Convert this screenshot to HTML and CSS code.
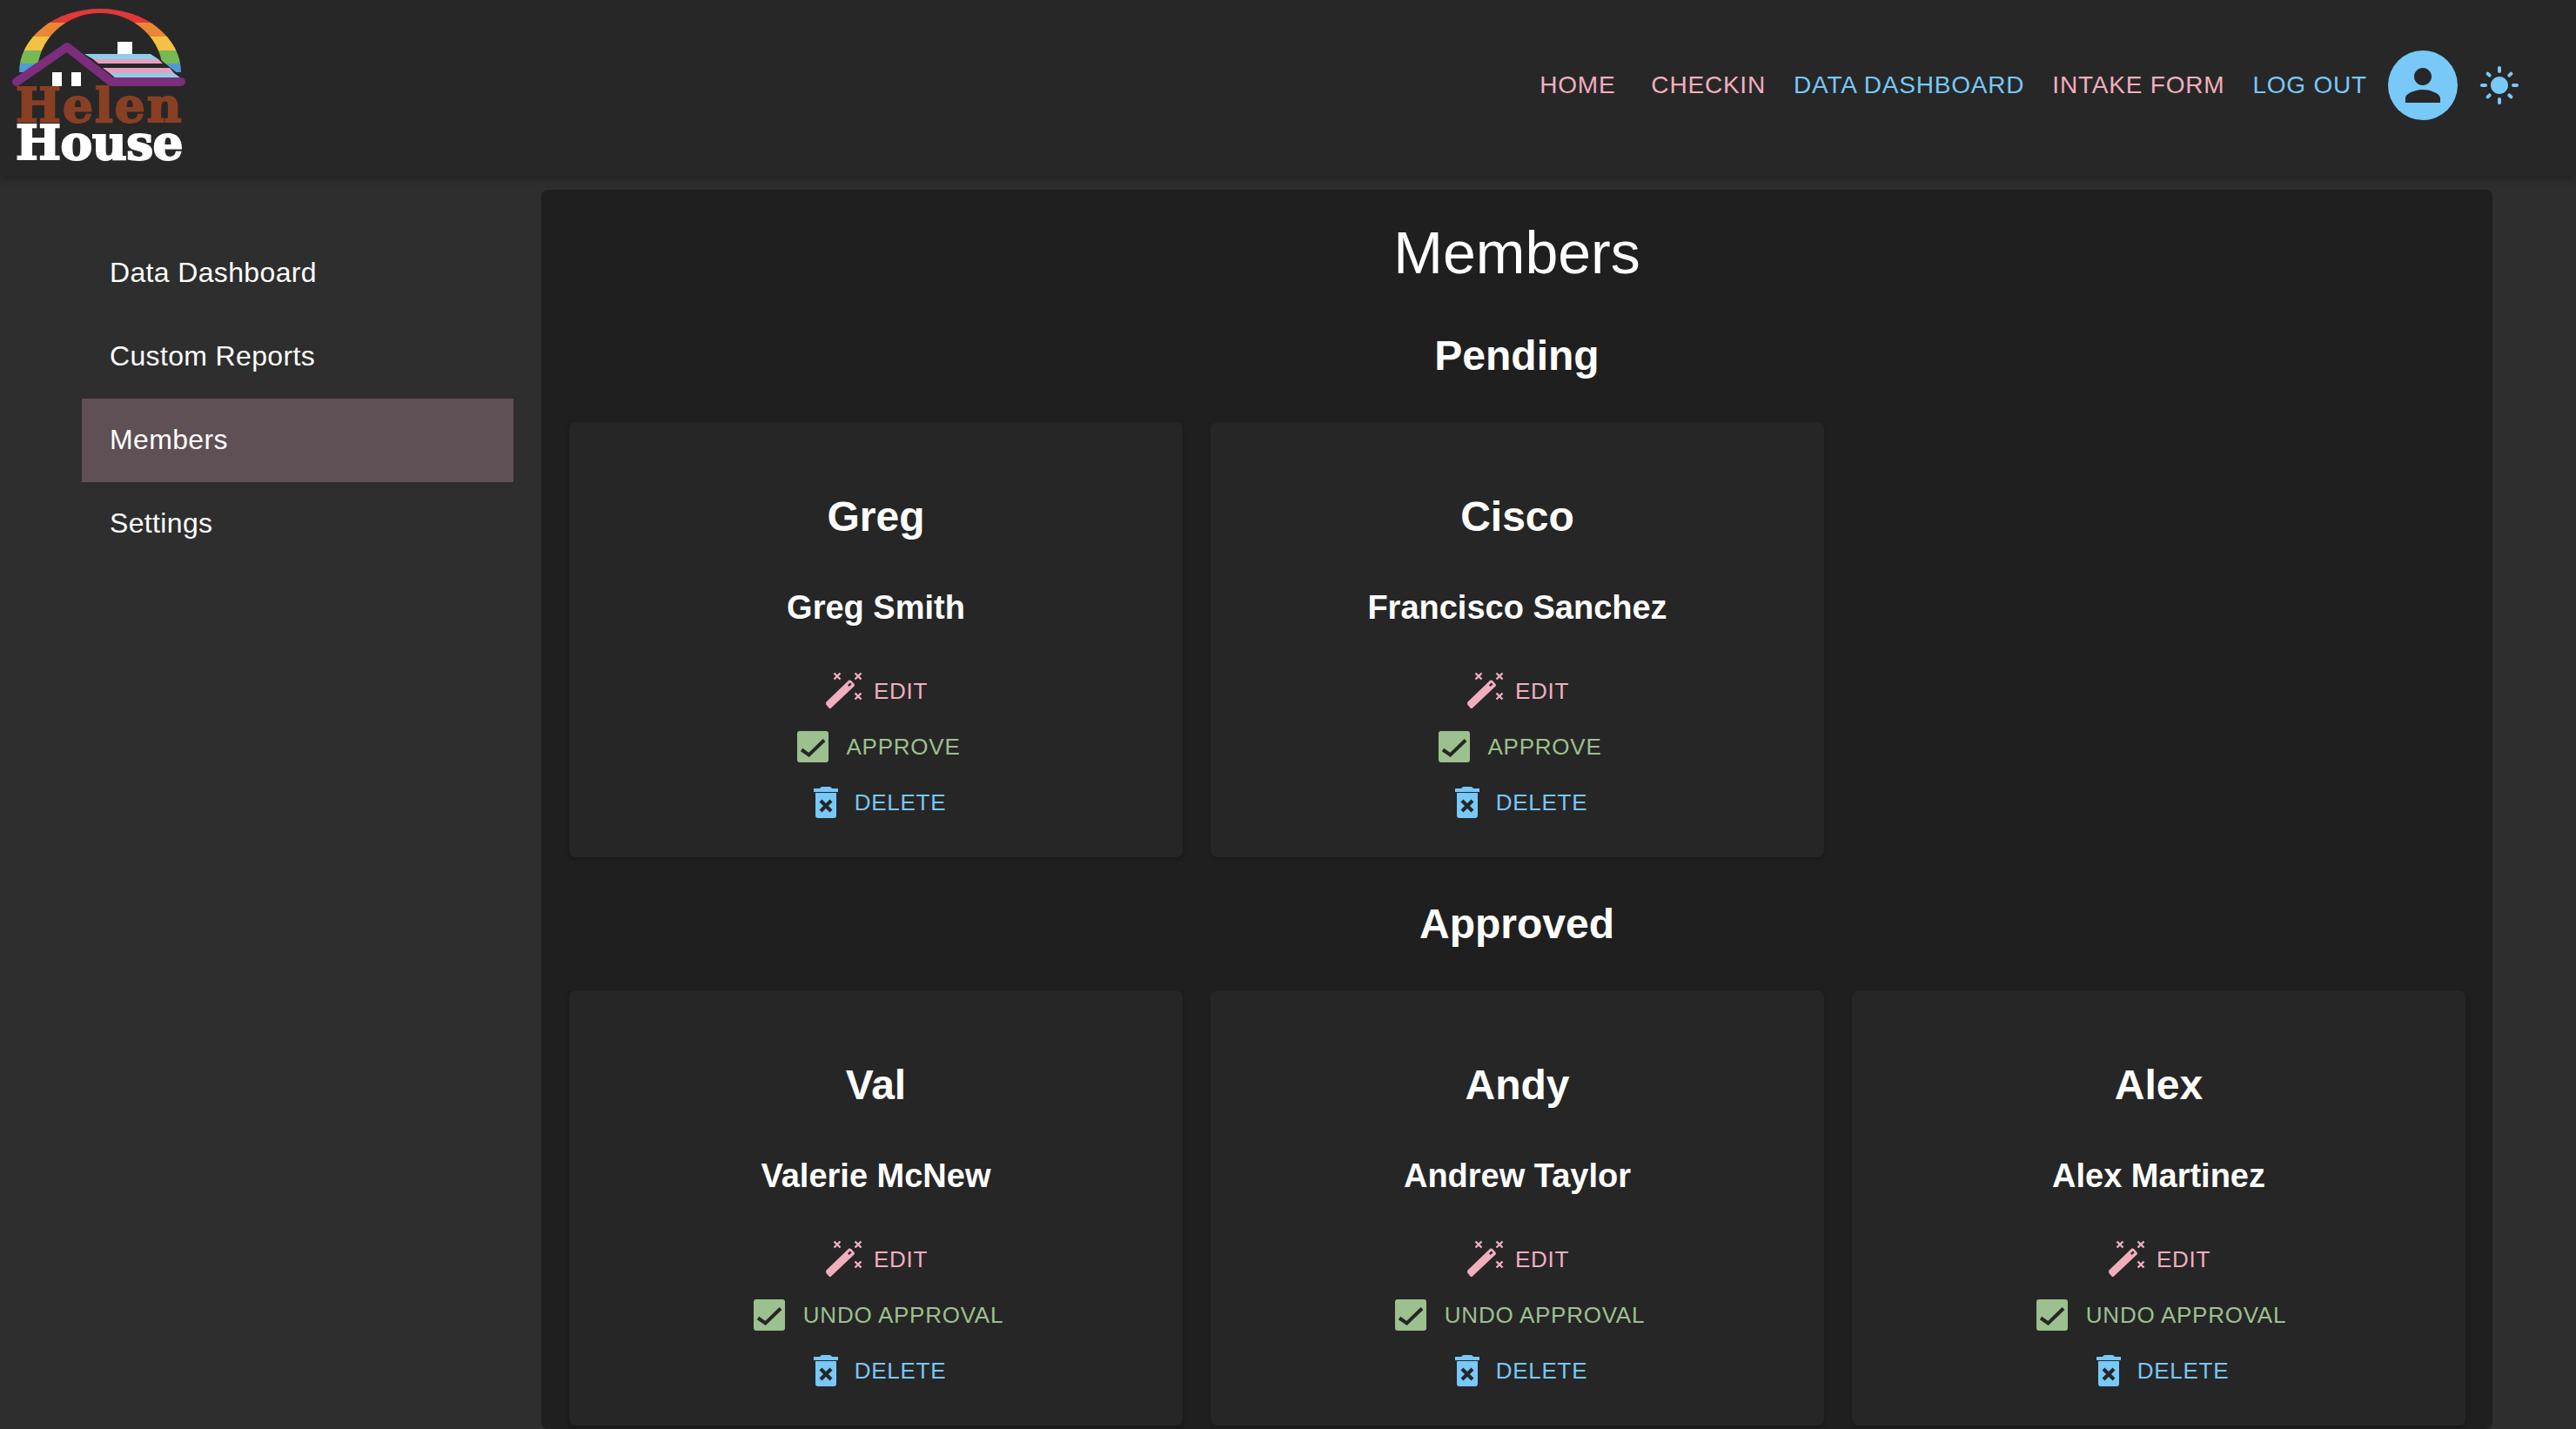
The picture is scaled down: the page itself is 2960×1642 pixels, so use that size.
FILE: index.html
```html
<!DOCTYPE html>
<html lang="en">
  <head>
    <title>Helen House</title>
    <link rel="stylesheet" href="styles.css">
  </head>
  <body>
    <svg class="sprites" width="0" height="0">
      <symbol id="wand" viewBox="0 0 44 44">
        <path fill="currentColor" d="M0.500 34.500 26.500 9.500q1.500-.5 3 1l3 3.500q1 1.500 0 2.500L6 41.500q-1 1-2.500 0L.5 38q-1-1.500 0-3.500Z"/>
        <path fill="#262626" d="M25 15l3-2.500 1.500 2-3 2.500Z"/>
        <path fill="none" stroke="currentColor" stroke-width="2.400" d="M9.500 1.500l7 7M16.500 1.500l-7 7M33.500 1.500l7 7M40.500 1.500l-7 7M33.500 24.500l7 7M40.500 24.500l-7 7"/>
      </symbol>
      <symbol id="check" viewBox="0 0 36 36">
        <rect width="36" height="36" rx="3" fill="currentColor"/>
        <path fill="none" stroke="#262626" stroke-width="4" d="M5 21.500 13.500 27.500 31 10.500"/>
      </symbol>
      <symbol id="trash" viewBox="0 0 28 36">
        <path fill="currentColor" d="M0 2h7q1-2 3-2h8q2 0 3 2h7v4H0ZM2 7h24v26q0 3-3 3H5q-3 0-3-3Z"/>
        <path fill="none" stroke="#262626" stroke-width="4.200" d="M8 16l12 12M20 16 8 28"/>
      </symbol>
      <clipPath id="arc">
        <path fill-rule="evenodd" clip-rule="evenodd" d="M22 83A93 73 0 0 1 208 83H187A72 68 0 0 0 43 83Z"/>
      </clipPath>
    </svg>

    <header class="appbar">
      <div class="brand">
        <svg class="logo" viewBox="0 0 216 100" width="216" height="100">
          <g clip-path="url(#arc)">
            <rect x="20" y="73" width="190" height="10" fill="#4f9bd4"/>
            <rect x="20" y="58" width="190" height="15" fill="#78b956"/>
            <rect x="20" y="42" width="190" height="16" fill="#f3c244"/>
            <rect x="20" y="26" width="190" height="16" fill="#ea8636"/>
            <rect x="20" y="8" width="190" height="18" fill="#e0393a"/>
          </g>
          <path fill="#272727" d="M96 61h79l36 29v8H130L76 58Z"/>
          <path fill="#fff" d="M135 48h17v14h-17Z"/>
          <path fill="#8ecde6" d="M97 62h76l9 6H107Z"/>
          <path fill="#e79fbf" d="M107 68h75l5 5H113Z"/>
          <path fill="#e79fbf" d="M118 78h77l5 6H126Z"/>
          <path fill="#8ecde6" d="M126 84h74l8 6H133Z"/>
          <path fill="none" stroke="#7c2d7c" stroke-width="10" stroke-linecap="round" stroke-linejoin="round" d="M19 94 77 54l51 40h80"/>
          <path fill="#fff" d="M60 83h11v16H60ZM82 83h11v16H82Z"/>
        </svg>
        <div class="logo-text">
          <div class="logo-helen">Helen</div>
          <div class="logo-house">House</div>
        </div>
      </div>
      <nav class="topnav">
        <a class="pink home-link" href="#">HOME</a>
        <a class="pink" href="#">CHECKIN</a>
        <a class="blue" href="#">DATA DASHBOARD</a>
        <a class="pink" href="#">INTAKE FORM</a>
        <a class="blue logout-link" href="#">LOG OUT</a>
        <span class="avatar">
          <svg viewBox="0 0 24 24" width="60" height="60"><path d="M12 12c2.21 0 4-1.790 4-4s-1.790-4-4-4-4 1.790-4 4 1.790 4 4 4zm0 2c-2.670 0-8 1.340-8 4v2h16v-2c0-2.660-5.330-4-8-4z"/></svg>
        </span>
        <svg class="sun" viewBox="0 0 24 24" width="48" height="48"><path d="M12 7c-2.760 0-5 2.240-5 5s2.240 5 5 5 5-2.240 5-5-2.240-5-5-5zM2 13h2c.55 0 1-.45 1-1s-.45-1-1-1H2c-.55 0-1 .45-1 1s.45 1 1 1zm18 0h2c.55 0 1-.45 1-1s-.45-1-1-1h-2c-.55 0-1 .45-1 1s.45 1 1 1zM11 2v2c0 .55.45 1 1 1s1-.45 1-1V2c0-.55-.45-1-1-1s-1 .45-1 1zm0 18v2c0 .55.45 1 1 1s1-.45 1-1v-2c0-.55-.45-1-1-1s-1 .45-1 1zM5.990 4.580c-.39-.39-1.030-.39-1.410 0-.39.39-.39 1.030 0 1.410l1.060 1.060c.39.39 1.030.39 1.410 0s.39-1.030 0-1.410L5.990 4.580zm12.370 12.370c-.39-.39-1.030-.39-1.410 0-.39.39-.39 1.030 0 1.410l1.060 1.060c.39.39 1.030.39 1.410 0 .39-.39.39-1.030 0-1.410l-1.060-1.060zm1.060-10.960c.39-.39.39-1.030 0-1.410-.39-.39-1.030-.39-1.410 0l-1.060 1.060c-.39.39-.39 1.030 0 1.410s1.030.39 1.410 0l1.060-1.060zM7.050 18.360c.39-.39.39-1.030 0-1.410-.39-.39-1.030-.39-1.410 0l-1.060 1.060c-.39.39-.39 1.030 0 1.410s1.030.39 1.410 0l1.060-1.060z"/></svg>
      </nav>
    </header>

    <div class="layout">
      <aside class="sidebar">
        <a href="#">Data Dashboard</a>
        <a href="#">Custom Reports</a>
        <a class="active" href="#">Members</a>
        <a href="#">Settings</a>
      </aside>
      <main class="panel">
        <h1>Members</h1>
        <h2>Pending</h2>
        <div class="cards">
          <section class="card">
            <h3>Greg</h3>
            <h4>Greg Smith</h4>
            <a class="act pink" href="#"><svg class="i-wand"><use href="#wand"/></svg>EDIT</a>
            <a class="act green" href="#"><svg class="i-check"><use href="#check"/></svg>APPROVE</a>
            <a class="act blue" href="#"><svg class="i-trash"><use href="#trash"/></svg>DELETE</a>
          </section>
          <section class="card">
            <h3>Cisco</h3>
            <h4>Francisco Sanchez</h4>
            <a class="act pink" href="#"><svg class="i-wand"><use href="#wand"/></svg>EDIT</a>
            <a class="act green" href="#"><svg class="i-check"><use href="#check"/></svg>APPROVE</a>
            <a class="act blue" href="#"><svg class="i-trash"><use href="#trash"/></svg>DELETE</a>
          </section>
        </div>
        <h2>Approved</h2>
        <div class="cards">
          <section class="card">
            <h3>Val</h3>
            <h4>Valerie McNew</h4>
            <a class="act pink" href="#"><svg class="i-wand"><use href="#wand"/></svg>EDIT</a>
            <a class="act green" href="#"><svg class="i-check"><use href="#check"/></svg>UNDO APPROVAL</a>
            <a class="act blue" href="#"><svg class="i-trash"><use href="#trash"/></svg>DELETE</a>
          </section>
          <section class="card">
            <h3>Andy</h3>
            <h4>Andrew Taylor</h4>
            <a class="act pink" href="#"><svg class="i-wand"><use href="#wand"/></svg>EDIT</a>
            <a class="act green" href="#"><svg class="i-check"><use href="#check"/></svg>UNDO APPROVAL</a>
            <a class="act blue" href="#"><svg class="i-trash"><use href="#trash"/></svg>DELETE</a>
          </section>
          <section class="card">
            <h3>Alex</h3>
            <h4>Alex Martinez</h4>
            <a class="act pink" href="#"><svg class="i-wand"><use href="#wand"/></svg>EDIT</a>
            <a class="act green" href="#"><svg class="i-check"><use href="#check"/></svg>UNDO APPROVAL</a>
            <a class="act blue" href="#"><svg class="i-trash"><use href="#trash"/></svg>DELETE</a>
          </section>
        </div>
      </main>
    </div>
  </body>
</html>
```

FILE: styles.css
```css
* { box-sizing: border-box; }
html, body { height: 100%; }
body { margin: 0; background: #2e2e2e; color: #fff; font-family: "Liberation Sans", Arial, sans-serif; overflow: hidden; }
a { text-decoration: none; color: inherit; }
h1, h2, h3, h4 { margin: 0; text-align: center; }

.sprites { position: absolute; }
.pink { color: #f0aebf; fill: #f0aebf; }
.blue { color: #78c8f8; fill: #78c8f8; }
.green { color: #9cc08e; fill: #9cc08e; }

.appbar { position: relative; height: 202px; padding-bottom: 7px; background: #272727; display: flex; align-items: center; justify-content: space-between; box-shadow: 0 4px 8px rgba(0, 0, 0, .3); }
.brand { align-self: flex-start; width: 216px; }
.logo { display: block; }
.logo-text { margin: -1px 0 0 18px; font-family: "DejaVu Serif", serif; font-weight: bold; font-size: 55px; line-height: 43px; -webkit-text-stroke: 2px currentColor; }
.logo-helen { color: #893f24; letter-spacing: 2px; }
.logo-house { color: #fff; letter-spacing: -.5px; }

.topnav { display: flex; align-items: center; padding-right: 64px; font-size: 28px; letter-spacing: .8px; }
.topnav a { margin-right: 32px; }
.topnav .home-link { margin-right: 41px; }
.topnav .logout-link { margin-right: 24px; }
.avatar { width: 80px; height: 80px; border-radius: 50%; background: #78c8f8; display: flex; align-items: center; justify-content: center; fill: #272727; margin-right: 24px; }
.sun { fill: #78c8f8; }

.layout { display: flex; height: calc(100% - 202px); }
.sidebar { width: 622px; padding: 64px 32px 0 94px; flex: none; display: flex; flex-direction: column; }
.sidebar a { height: 96px; flex: none; display: flex; align-items: center; padding: 0 0 1px 32px; font-size: 32px; letter-spacing: .35px; }
.sidebar a.active { background: #5f5055; }

.panel { width: 2242px; margin-top: 16px; padding: 0 32px; background: #1f1f1f; border-radius: 8px; flex: none; }
.panel h1 { font-weight: 400; font-size: 68px; line-height: 84px; padding-top: 30px; }
.panel h2 { font-size: 48px; line-height: 56px; margin-top: 49px; }
.cards { display: grid; grid-template-columns: repeat(3, 705px); gap: 32px; margin-top: 48px; }
.card { height: 500px; background: #262626; border-radius: 8px; box-shadow: 0 3px 5px rgba(0, 0, 0, .2); padding-top: 81px; display: flex; flex-direction: column; align-items: center; }
.card h3 { font-size: 48px; line-height: 56px; }
.card h4 { font-size: 38px; line-height: 44px; margin-top: 54px; margin-bottom: 42px; }
.act { height: 64px; flex: none; display: flex; align-items: center; font-size: 26px; letter-spacing: .75px; }
.act svg { flex: none; }
.i-wand { width: 44px; height: 44px; margin: 0 11px 0 2px; }
.i-check { width: 36px; height: 36px; margin: 0 21px 0 6px; }
.i-trash { width: 28px; height: 36px; margin: 0 19px 0 9px; }
```
